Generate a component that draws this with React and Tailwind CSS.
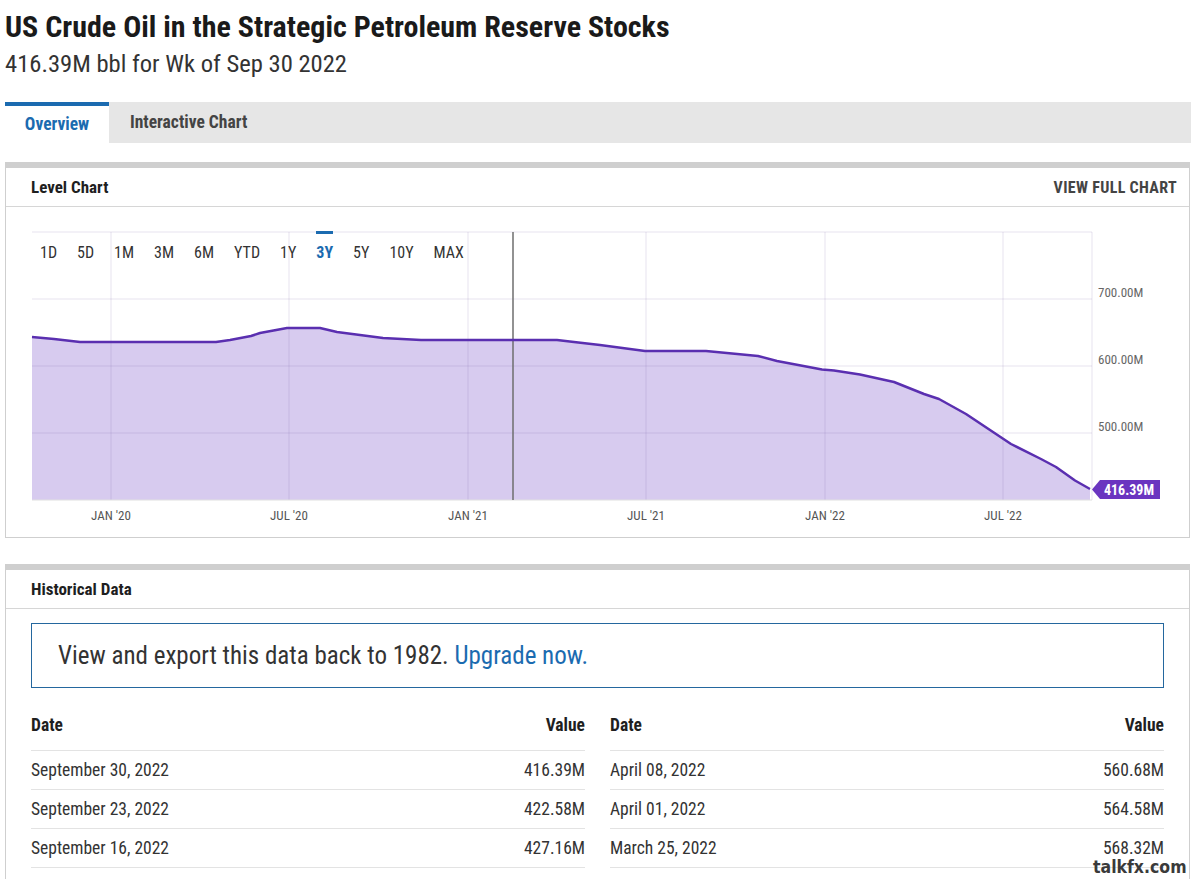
import React from 'react';

const ranges = ['1D', '5D', '1M', '3M', '6M', 'YTD', '1Y', '3Y', '5Y', '10Y', 'MAX'];

const points = [
  [32, 338], [54, 340], [80, 343], [216, 343], [230, 341], [251, 337], [260, 334], [287, 329],
  [320, 329], [337, 333], [360, 336], [383, 339], [421, 341], [557, 341], [574, 343], [600, 346],
  [645, 352], [706, 352], [758, 357], [777, 362], [822, 370.5], [834, 371.5], [860, 375.5],
  [894, 383], [924, 395], [939, 400], [966, 415], [996, 435], [1011, 445], [1041, 460],
  [1056, 468], [1075, 481.5], [1090, 490],
];

const linePath = points.map(([x, y], i) => `${i ? 'L' : 'M'}${x} ${y}`).join(' ');
const areaPath = `${linePath} L1090 501 L32 501 Z`;

const xLabels = [
  [111, "JAN '20"], [289, "JUL '20"], [468, "JAN '21"],
  [646, "JUL '21"], [825, "JAN '22"], [1003, "JUL '22"],
];

const yLabels = [
  [300, '700.00M'], [367, '600.00M'], [434, '500.00M'],
];

const leftRows = [
  ['September 30, 2022', '416.39M'],
  ['September 23, 2022', '422.58M'],
  ['September 16, 2022', '427.16M'],
];

const rightRows = [
  ['April 08, 2022', '560.68M'],
  ['April 01, 2022', '564.58M'],
  ['March 25, 2022', '568.32M'],
];

function DataTable({ rows }) {
  return (
    <div className="flex-1">
      <div className="flex justify-between items-center pt-[25px] pb-[13px] border-b border-[#e3e3e3] text-[17.5px] leading-6 font-bold text-[#1f1f1f]">
        <span>Date</span>
        <span>Value</span>
      </div>
      {rows.map(([date, value]) => (
        <div key={date} className="flex justify-between items-center h-[39px] border-b border-[#e3e3e3] text-[17.5px] text-[#333]">
          <span>{date}</span>
          <span>{value}</span>
        </div>
      ))}
    </div>
  );
}

export default function App() {
  return (
    <div className="relative h-[879px] bg-white font-['Roboto_Condensed',Roboto,sans-serif] font-stretch-condensed overflow-hidden">
      <div className="pl-[5px]">
        <h1 className="pt-[9px] text-[30px] leading-9 font-bold text-[#1a1a1a]">
          US Crude Oil in the Strategic Petroleum Reserve Stocks
        </h1>
        <div className="mt-[3px] text-[24.6px] leading-8 text-[#333]">416.39M bbl for Wk of Sep 30 2022</div>
      </div>

      <div className="mt-[22px] ml-[5px] h-[41px] flex bg-[#e6e6e6]">
        <div className="w-[104px] bg-white border-t-4 border-[#1b6bb0] flex items-center justify-center text-[17.5px] font-bold text-[#1b6bb0]">
          Overview
        </div>
        <div className="pl-[21px] flex items-center text-[17.5px] font-bold text-[#444]">Interactive Chart</div>
      </div>

      <section className="mt-[19px] ml-[5px] w-[1185px] border border-t-[6px] border-[#cfcfcf]">
        <div className="h-[39px] pl-[25px] pr-[12px] flex items-center justify-between border-b border-[#d6d6d6]">
          <span className="text-[17px] font-bold text-[#1f1f1f] pt-[1px]">Level Chart</span>
          <span className="text-[16px] font-bold tracking-[0.02em] text-[#444] pt-[1px]">VIEW FULL CHART</span>
        </div>
        <div className="relative h-[330px]">
          <svg width="1183" height="330" viewBox="6 208 1183 330" className="block">
            <rect x="32" y="233" width="1060" height="268" fill="#fff" />
            <path d={areaPath} fill="#d7cbef" />
            {[233, 300, 367, 434].map((y) => (
              <line key={y} x1="32" x2="1092" y1={y} y2={y} stroke="#7b6aa8" strokeOpacity="0.18" />
            ))}
            {[111, 289, 468, 646, 825, 1003, 1092].map((x) => (
              <line key={x} x1={x} x2={x} y1="233" y2="501" stroke="#7b6aa8" strokeOpacity="0.18" />
            ))}
            <line x1="32" x2="1092" y1="501" y2="501" stroke="#e0e0e0" />
            <line x1="513" x2="513" y1="233" y2="501" stroke="#6e6e6e" strokeWidth="1.5" />
            <path d={linePath} fill="none" stroke="#5a2fb0" strokeWidth="2.5" strokeLinejoin="round" />
            {yLabels.map(([y, t]) => (
              <text key={t} x="1098" y={y - 2} fontSize="13" fill="#666">{t}</text>
            ))}
            {xLabels.map(([x, t]) => (
              <text key={t} x={x} y="521" fontSize="13" fill="#555" textAnchor="middle">{t}</text>
            ))}
            <polygon points="1092,490.5 1100,481 1160,481 1160,500 1100,500" fill="#6a35c0" />
            <text x="1129" y="496" fontSize="14" fontWeight="700" fill="#fff" textAnchor="middle">416.39M</text>
          </svg>
          <div className="absolute left-[24px] top-[26px] flex h-[39px] items-center">
            {ranges.map((r) => (
              <div
                key={r}
                className={
                  r === '3Y'
                    ? 'relative px-[10px] text-[16px] font-bold text-[#1b6bb0]'
                    : 'px-[10px] text-[16px] text-[#333]'
                }
              >
                {r === '3Y' && <span className="absolute left-[10px] right-[10px] -top-[10px] h-[3px] bg-[#1b6bb0]" />}
                {r}
              </div>
            ))}
          </div>
        </div>
      </section>

      <section className="mt-[26px] ml-[5px] w-[1185px] border border-t-[6px] border-[#cfcfcf] pb-6">
        <div className="h-[39px] px-[25px] flex items-center border-b border-[#d6d6d6]">
          <span className="text-[17px] font-bold text-[#1f1f1f] pt-[1px]">Historical Data</span>
        </div>
        <div className="mx-[25px] mt-[14px] h-[65px] border border-[#24679e] flex items-center pl-[26px] text-[25px] text-[#333]">
          <span>
            View and export this data back to 1982. <span className="text-[#1b6bb0]">Upgrade now.</span>
          </span>
        </div>
        <div className="mx-[25px] flex gap-[25px]">
          <DataTable rows={leftRows} />
          <DataTable rows={rightRows} />
        </div>
      </section>

      <div className="absolute left-[1093px] top-[857px] text-[17.5px] leading-5 font-black text-[#3a3a3a] font-['DejaVu_Sans',sans-serif]">
        talkfx.com
      </div>
    </div>
  );
}
